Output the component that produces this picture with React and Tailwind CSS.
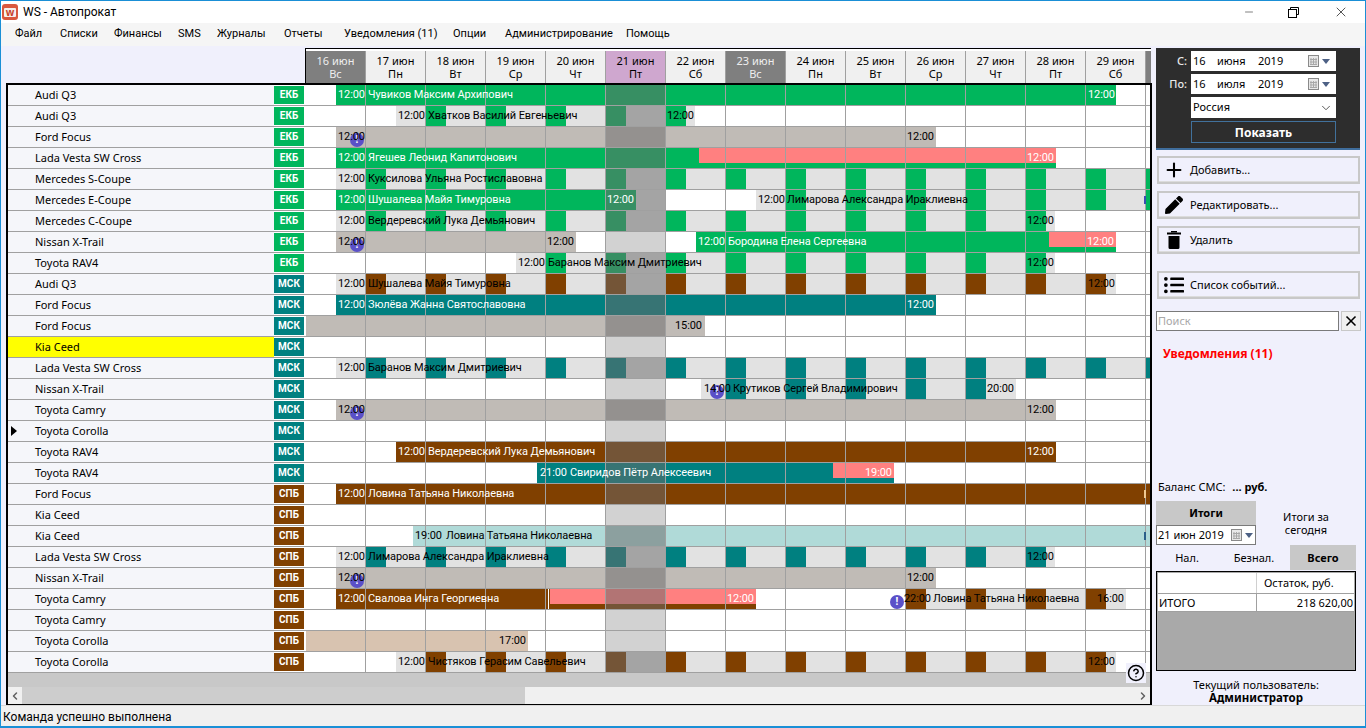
import { Plus, CircleHelp, ChevronDown, ChevronLeft, ChevronRight, X, Minus } from "lucide-react";
import { FaPen, FaListUl } from "react-icons/fa";

const G = "#00b65c";
const T = "#008080";
const B = "#804000";
const GREY = "#c0bbb6";
const LIGHT = "#e2e2e2";
const PINK = "#ff8080";

const ORIGIN = 306;
const CELL = 60;
const TODAY_FROM = 606;
const TODAY_TO = 665;

const menu = [
  ["Файл", "w-[45px]"],
  ["Списки", "w-[54px]"],
  ["Финансы", "w-[64px]"],
  ["SMS", "w-[39px]"],
  ["Журналы", "w-[67px]"],
  ["Отчеты", "w-[60px]"],
  ["Уведомления (11)", "w-[109px]"],
  ["Опции", "w-[52px]"],
  ["Администрирование", "w-[121px]"],
  ["Помощь", "w-[60px]"],
];

const days = [
  ["16 июн", "Вс", "off"],
  ["17 июн", "Пн"],
  ["18 июн", "Вт"],
  ["19 июн", "Ср"],
  ["20 июн", "Чт"],
  ["21 июн", "Пт", "today"],
  ["22 июн", "Сб"],
  ["23 июн", "Вс", "off"],
  ["24 июн", "Пн"],
  ["25 июн", "Вт"],
  ["26 июн", "Ср"],
  ["27 июн", "Чт"],
  ["28 июн", "Пт"],
  ["29 июн", "Сб"],
];

// bars: [from, to, color, kind]  texts: [x, text, white?]  marks: x of the alert circle  ticks: clipped text at the right edge
const rows = [
  { car: "Audi Q3", city: "ЕКБ", bars: [[336, 1116, G]], texts: [[338, "12:00", 1], [368, "Чувиков Максим Архипович", 1], [1088, "12:00", 1]] },
  { car: "Audi Q3", city: "ЕКБ", bars: [[396, 695, G, "stripe"]], texts: [[398, "12:00"], [428, "Хватков Василий Евгеньевич"], [667, "12:00"]] },
  { car: "Ford Focus", city: "ЕКБ", bars: [[336, 936, GREY]], marks: [350], texts: [[338, "12:00"], [907, "12:00"]] },
  { car: "Lada Vesta SW Cross", city: "ЕКБ", bars: [[336, 1056, G], [699, 1056, PINK, "top"]], texts: [[338, "12:00", 1], [368, "Ягешев Леонид Капитонович", 1], [1027, "12:00", 1]] },
  { car: "Mercedes S-Coupe", city: "ЕКБ", bars: [[336, 1150, G, "stripe"]], texts: [[338, "12:00"], [368, "Куксилова Ульяна Ростиславовна"]] },
  { car: "Mercedes E-Coupe", city: "ЕКБ", bars: [[336, 636, G], [636, 666, LIGHT], [756, 1150, G, "stripe"]], ticks: ["#3b4fb0"], texts: [[338, "12:00", 1], [368, "Шушалева Майя Тимуровна", 1], [607, "12:00", 1], [758, "12:00"], [787, "Лимарова Александра Ираклиевна"]] },
  { car: "Mercedes C-Coupe", city: "ЕКБ", bars: [[336, 1055, G, "stripe"]], texts: [[338, "12:00"], [368, "Вердеревский Лука Демьянович"], [1027, "12:00"]] },
  { car: "Nissan X-Trail", city: "ЕКБ", bars: [[336, 576, GREY], [696, 1116, G], [1049, 1116, PINK, "top"]], marks: [350], texts: [[338, "12:00"], [547, "12:00"], [698, "12:00", 1], [728, "Бородина Елена Сергеевна", 1], [1087, "12:00", 1]] },
  { car: "Toyota RAV4", city: "ЕКБ", bars: [[516, 1055, G, "stripe"]], texts: [[518, "12:00"], [548, "Баранов Максим Дмитриевич"], [1027, "12:00"]] },
  { car: "Audi Q3", city: "МСК", bars: [[336, 1116, B, "stripe"]], texts: [[338, "12:00"], [368, "Шушалева Майя Тимуровна"], [1088, "12:00"]] },
  { car: "Ford Focus", city: "МСК", bars: [[336, 936, T]], texts: [[338, "12:00", 1], [368, "Зюлёва Жанна Святославовна", 1], [907, "12:00", 1]] },
  { car: "Ford Focus", city: "МСК", bars: [[306, 705, GREY]], texts: [[675, "15:00"]] },
  { car: "Kia Ceed", city: "МСК", selected: true },
  { car: "Lada Vesta SW Cross", city: "МСК", bars: [[336, 1150, T, "stripe"]], texts: [[338, "12:00"], [368, "Баранов Максим Дмитриевич"]] },
  { car: "Nissan X-Trail", city: "МСК", bars: [[701, 1016, T, "stripe"]], marks: [710], texts: [[704, "14:00"], [733, "Крутиков Сергей Владимирович"], [987, "20:00"]] },
  { car: "Toyota Camry", city: "МСК", bars: [[336, 1056, GREY]], marks: [350], texts: [[338, "12:00"], [1027, "12:00"]] },
  { car: "Toyota Corolla", city: "МСК", current: true },
  { car: "Toyota RAV4", city: "МСК", bars: [[396, 1056, B]], texts: [[398, "12:00", 1], [428, "Вердеревский Лука Демьянович", 1], [1027, "12:00", 1]] },
  { car: "Toyota RAV4", city: "МСК", bars: [[537, 894, T], [833, 894, PINK, "top"]], texts: [[540, "21:00", 1], [570, "Свиридов Пётр Алексеевич", 1], [865, "19:00", 1]] },
  { car: "Ford Focus", city: "СПБ", bars: [[336, 1150, B]], ticks: ["#f0c890"], texts: [[338, "12:00", 1], [368, "Ловина Татьяна Николаевна", 1]] },
  { car: "Kia Ceed", city: "СПБ" },
  { car: "Kia Ceed", city: "СПБ", bars: [[413, 1150, "#b0dad8"]], ticks: ["#2b5f8a"], texts: [[415, "19:00"], [446, "Ловина Татьяна Николаевна"]] },
  { car: "Lada Vesta SW Cross", city: "СПБ", bars: [[336, 1055, T, "stripe"]], texts: [[338, "12:00"], [368, "Лимарова Александра Ираклиевна"], [1027, "12:00"]] },
  { car: "Nissan X-Trail", city: "СПБ", bars: [[336, 936, GREY]], marks: [350], texts: [[338, "12:00"], [907, "12:00"]] },
  { car: "Toyota Camry", city: "СПБ", bars: [[336, 548, B], [549, 756, B], [550, 756, PINK, "top"], [906, 1126, B, "stripe"]], marks: [890], texts: [[338, "12:00", 1], [368, "Свалова Инга Георгиевна", 1], [727, "12:00", 1], [904, "22:00"], [933, "Ловина Татьяна Николаевна"], [1097, "16:00"]] },
  { car: "Toyota Camry", city: "СПБ" },
  { car: "Toyota Corolla", city: "СПБ", bars: [[306, 528, "#d8c3b0"]], texts: [[499, "17:00"]] },
  { car: "Toyota Corolla", city: "СПБ", bars: [[396, 1116, B, "stripe"]], texts: [[398, "12:00"], [428, "Чистяков Герасим Савельевич"], [1088, "12:00"]] },
];

const cityColor = { "ЕКБ": "bg-[#00b65c]", "МСК": "bg-[#008080]", "СПБ": "bg-[#804000]" };

// a booking that is not paid yet: grey with a coloured block at the start of every day
function stripeSegments(from, to, color) {
  const out = [[from, to, LIGHT]];
  for (let c = ORIGIN; c < to; c += CELL) {
    const a = Math.max(c, from);
    const b = Math.min(c + 20, to);
    if (a < b) out.push([a, b, color]);
  }
  return out;
}

function Bar({ from, to, color, top }) {
  return (
    <div
      className={top ? "absolute top-0 h-[15px]" : "absolute top-0 bottom-0"}
      style={{ left: from - ORIGIN, width: to - from, backgroundColor: color }}
    />
  );
}

function Timeline({ row }) {
  const bars = row.bars || [];
  // the current day is dimmed harder where a booking lies under it
  const dims = bars
    .filter((b) => b[3] !== "top" && b[0] < TODAY_TO && b[1] > TODAY_FROM)
    .map((b) => [Math.max(b[0], TODAY_FROM), Math.min(b[1], TODAY_TO)]);
  return (
    <div className="relative flex w-[844px] h-full overflow-hidden bg-white">
      {bars.flatMap((b, i) =>
        b[3] === "stripe"
          ? stripeSegments(b[0], b[1], b[2]).map((s, j) => <Bar key={`${i}-${j}`} from={s[0]} to={s[1]} color={s[2]} />)
          : [<Bar key={i} from={b[0]} to={b[1]} color={b[2]} top={b[3] === "top"} />]
      )}
      {days.map((d, i) => (
        <div
          key={i}
          className={`relative w-[60px] shrink-0 border-r border-[#a0a0a0] ${d[2] === "today" ? "bg-black/[0.176]" : ""}`}
        />
      ))}
      {dims.map((d, i) => (
        <div
          key={i}
          className="absolute top-0 bottom-0 bg-[#868686]/[0.41]"
          style={{ left: d[0] - ORIGIN, width: d[1] - d[0] }}
        />
      ))}
      {(row.ticks || []).map((c) => (
        <div key={c} className="absolute left-[838px] top-[6px] w-[2px] h-[8px]" style={{ backgroundColor: c }} />
      ))}
      {(row.marks || []).map((x) => (
        <div
          key={x}
          className="absolute top-[6px] w-[14px] h-[14px] rounded-full bg-[#5a50c8] text-white text-[10px] font-bold leading-[13px] text-center"
          style={{ left: x - ORIGIN }}
        >
          !
        </div>
      ))}
      {(row.texts || []).map((t, i) => (
        <span
          key={i}
          className={`absolute top-0 whitespace-nowrap leading-[20px] tracking-[-0.1px] font-['Roboto','Noto_Sans',sans-serif] ${t[2] ? "text-white" : "text-black"}`}
          style={{ left: t[0] - ORIGIN }}
        >
          {t[1]}
        </span>
      ))}
    </div>
  );
}

function Row({ row }) {
  return (
    <div className="flex h-[21px] border-b border-[#a0a0a0]">
      <div className={`relative w-[266px] pl-[27px] leading-[19px] ${row.selected ? "bg-[#ffff00]" : "bg-[#f5f6fa]"}`}>
        {row.current && (
          <span className="absolute left-[3px] top-[5px] border-y-[5px] border-y-transparent border-l-[6px] border-l-black" />
        )}
        {row.car}
      </div>
      <div className="w-[32px] bg-white pr-[2px] py-px">
        <div className={`h-full text-white text-[10px] font-bold leading-[17px] text-center font-['Roboto','Noto_Sans',sans-serif] ${cityColor[row.city]}`}>{row.city}</div>
      </div>
      <Timeline row={row} />
    </div>
  );
}

function DayHead({ day }) {
  const tone =
    day[2] === "off" ? "bg-[#7f7f7f] text-[#eeeeee]" : day[2] === "today" ? "bg-[#cfa7cf] text-black" : "bg-[#f0f0f0] text-black";
  return (
    <div className={`w-[60px] shrink-0 border-r border-[#a0a0a0] text-center leading-[13px] pt-[3px] ${tone}`}>
      <div>{day[0]}</div>
      <div>{day[1]}</div>
    </div>
  );
}

function CalendarIcon() {
  return (
    <span className="flex items-center gap-[2px]">
      <svg width="12" height="13" viewBox="0 0 12 13">
        <rect x="0.5" y="0.5" width="10" height="11" fill="#e8e8e8" stroke="#8a8a8a" />
        <path d="M3 3v7M5.5 3v7M8 3v7M2 4.5h7M2 7h7M2 9.5h7" stroke="#a8a8a8" strokeWidth="1" />
      </svg>
      <span className="border-x-[4px] border-x-transparent border-t-[5px] border-t-[#4d6185]" />
    </span>
  );
}

function TrashIcon() {
  return (
    <svg width="14" height="18" viewBox="0 0 14 18" fill="#000">
      <rect x="4" y="0" width="6" height="1.5" />
      <rect x="0" y="1.5" width="14" height="2" />
      <path d="M1.5 5h11v11.5a1.5 1.5 0 0 1-1.5 1.5H3a1.5 1.5 0 0 1-1.5-1.5z" />
    </svg>
  );
}

function DateField({ d, m, y }) {
  return (
    <div className="flex items-center h-5 bg-white pl-[2px] pr-[6px] text-black">
      <span className="w-[24px]">{d}</span>
      <span className="w-[41px]">{m}</span>
      <span className="flex-1">{y}</span>
      <CalendarIcon />
    </div>
  );
}

function ActionButton({ icon, label, className = "" }) {
  return (
    <div className={`flex items-center w-[203px] h-[28px] ml-px border-2 border-[#c8c8c8] bg-[#f0f0fc] shadow-[inset_0_-1px_0_#dcdcdc] ${className}`}>
      <span className="flex justify-center w-[30px]">{icon}</span>
      <span className="ml-[1px]">{label}</span>
    </div>
  );
}

function SidePanel() {
  return (
    <div className="w-[213px] pl-1 pt-[2px] text-[11px] text-black">
      <div className="w-[204px] h-[102px] bg-[#2d2d2d] border-b-2 border-[#3f6d9c] pt-[3px]">
        <div className="flex items-center">
          <span className="w-[31px] text-right font-medium text-[#e8e8e8]">С:</span>
          <div className="ml-[4px] w-[145px]"><DateField d="16" m="июня" y="2019" /></div>
        </div>
        <div className="flex items-center mt-[3px]">
          <span className="w-[31px] text-right font-medium text-[#e8e8e8]">По:</span>
          <div className="ml-[4px] w-[145px]"><DateField d="16" m="июля" y="2019" /></div>
        </div>
        <div className="flex items-center justify-between ml-[35px] mt-[3px] w-[145px] h-[21px] bg-white pl-[2px] pr-[3px]">
          <span>Россия</span>
          <ChevronDown size={14} strokeWidth={1.5} color="#444" />
        </div>
        <div className="ml-[35px] mt-[3px] w-[145px] h-[22px] border border-[#41719c] text-center text-[12px] text-white font-bold leading-[21px]">Показать</div>
      </div>
      <ActionButton className="mt-[6px]" label="Добавить..." icon={<Plus size={22} strokeWidth={2.25} color="#000" />} />
      <ActionButton className="mt-[7px]" label="Редактировать..." icon={<FaPen size={18} color="#000" />} />
      <ActionButton className="mt-[7px]" label="Удалить" icon={<TrashIcon />} />
      <ActionButton className="mt-[17px]" label="Список событий..." icon={<FaListUl size={20} color="#000" />} />

      <div className="flex items-center mt-[12px] gap-[2px]">
        <div className="w-[183px] h-5 bg-white border border-[#7a7a7a] pl-px leading-[18px] text-[#a8a8a8]">Поиск</div>
        <div className="flex items-center justify-center w-5 h-5 bg-[#f0f0f0] border border-[#c8c8c8]">
          <X size={16} strokeWidth={2.5} color="#000" />
        </div>
      </div>

      <div className="mt-[16px] ml-[7px] h-[133px] text-[12px] font-bold text-[#ff0000] leading-[14px]">Уведомления (11)</div>

      <div className="ml-[2px] leading-[14px]">
        Баланс СМС: <span className="ml-[4px] font-bold">... руб.</span>
      </div>

      <div className="flex mt-[7px]">
        <div className="w-[100px]">
          <div className="h-[24px] bg-[#c8c8c8] text-center font-bold leading-[24px]">Итоги</div>
          <div className="flex items-center justify-between h-5 bg-white border border-[#7a7a7a] pl-px pr-[2px]">
            <span>21 июн 2019</span>
            <CalendarIcon />
          </div>
        </div>
        <div className="w-[100px] pt-[9px] text-center leading-[13px]">
          Итоги за<br />сегодня
        </div>
      </div>

      <div className="flex h-[25px] w-[200px] leading-[25px] text-center">
        <div className="w-[62px]">Нал.</div>
        <div className="w-[72px]">Безнал.</div>
        <div className="w-[66px] bg-[#c8c8c8] font-bold">Всего</div>
      </div>

      <div className="w-[200px] h-[100px] mt-px border border-black bg-[#a9a9a9] p-px">
        <div className="flex h-[21px] bg-white border-b border-[#a0a0a0] leading-[20px]">
          <div className="w-[99px] border-r border-[#d0d0d0]" />
          <div className="flex-1 pl-[7px]">Остаток, руб.</div>
        </div>
        <div className="flex h-[18px] bg-white border-b border-[#a0a0a0] leading-[17px]">
          <div className="w-[99px] border-r border-[#a0a0a0] pl-px">ИТОГО</div>
          <div className="flex-1 text-right pr-[1px]">218 620,00</div>
        </div>
      </div>

      <div className="w-[200px] mt-[7px] text-center leading-[13px]">
        Текущий пользователь:
        <div className="font-bold text-[11.5px]">Администратор</div>
      </div>
    </div>
  );
}

export default function App() {
  return (
    <div className="flex flex-col w-[1366px] h-[728px] border border-b-2 border-[#1a8fd6] bg-white text-[11px] text-black font-['Noto_Sans','Liberation_Sans',sans-serif] overflow-hidden">
      {/* title bar */}
      <div className="relative flex items-center h-[22px] bg-white text-[12px] pl-px">
        <div className="flex items-center justify-center w-4 h-4 rounded-[3px] bg-[#d9583e] p-[2px]">
          <span className="block w-full h-[9px] bg-[#f6f0ec] text-[#c8432c] text-[10px] font-bold leading-[8px] text-center rounded-[1px]">w</span>
        </div>
        <span className="ml-[5px] font-['Roboto','Noto_Sans',sans-serif]">WS - Автопрокат</span>
        <div className="ml-auto flex items-center">
          <Minus size={12} strokeWidth={1} color="#000" />
          <svg className="ml-[33px]" width="11" height="11" viewBox="0 0 11 11" fill="none" stroke="#000">
            <path d="M2.5 2.5v-2h8v7h-2" />
            <rect x="0.5" y="2.5" width="8" height="8" />
          </svg>
          <X className="ml-[34px] mr-[16px]" size={16} strokeWidth={1} color="#000" />
        </div>
      </div>

      {/* menu */}
      <div className="flex items-center h-[23px] bg-[#f5f5f5] pl-[14px] text-[11px] font-['Roboto','Noto_Sans',sans-serif]">
        {menu.map(([m, w]) => (
          <span key={m} className={`whitespace-nowrap ${w}`}>{m}</span>
        ))}
      </div>

      <div className="flex flex-1 bg-[#f0f0fc] min-h-0">
        <div className="w-[1151px]">
          {/* day headers */}
          <div className="flex h-[37px] pt-[2px] pl-[304px]">
            <div className="flex w-[846px] border-l border-t border-black pt-[2px] bg-white">
              {days.map((d) => <DayHead key={d[0]} day={d} />)}
              <div className="flex-1 bg-[#7f7f7f]" />
            </div>
          </div>

          {/* chart */}
          <div className="relative ml-[5px] w-[1146px] h-[622px] border-2 border-b border-black bg-[#c8c8c8]">
            {rows.map((r, i) => <Row key={i} row={r} />)}
            <div className="absolute left-0 right-0 bottom-0 flex items-center h-[17px] bg-[#f0f0f0]">
              <ChevronLeft size={12} strokeWidth={3} color="#606060" className="ml-[1px]" />
              <div className="ml-px w-[503px] h-full bg-[#cdcdcd]" />
              <ChevronRight size={12} strokeWidth={3} color="#606060" className="ml-auto mr-px" />
            </div>
            <div className="absolute right-[4px] bottom-[21px] flex items-center justify-center w-5 h-5 bg-[#f0f0fc]">
              <CircleHelp size={18} strokeWidth={2} color="#000" />
            </div>
          </div>
        </div>
        <SidePanel />
      </div>

      {/* status bar */}
      <div className="h-[21px] bg-[#f0f0f0] border-t border-[#d8d8d8] pl-[2px] pt-px leading-[21px] text-[12px] font-['Roboto','Noto_Sans',sans-serif]">Команда успешно выполнена</div>
    </div>
  );
}
